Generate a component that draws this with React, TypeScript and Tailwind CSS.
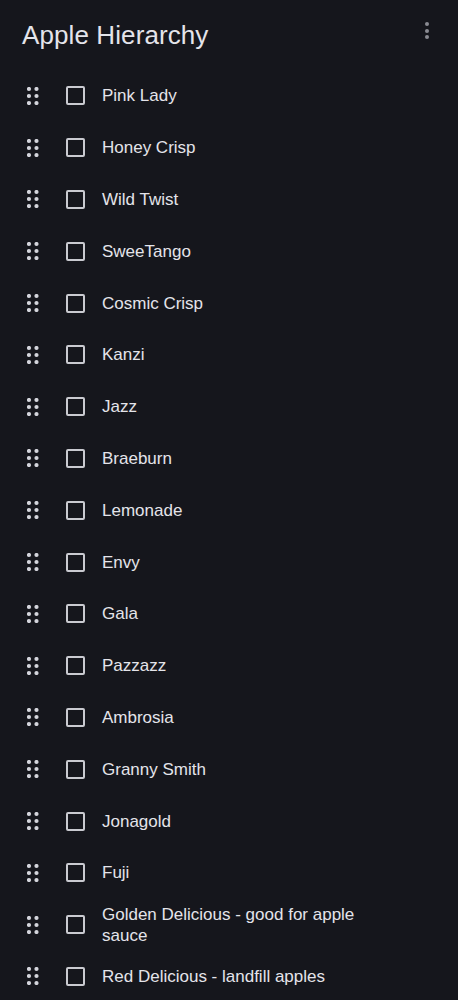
import React from 'react';

const APPLES = [
  'Pink Lady',
  'Honey Crisp',
  'Wild Twist',
  'SweeTango',
  'Cosmic Crisp',
  'Kanzi',
  'Jazz',
  'Braeburn',
  'Lemonade',
  'Envy',
  'Gala',
  'Pazzazz',
  'Ambrosia',
  'Granny Smith',
  'Jonagold',
  'Fuji',
  'Golden Delicious - good for apple sauce',
  'Red Delicious - landfill apples',
];

const DragHandle: React.FC = () => (
  <svg width="12" height="18" viewBox="0 0 12 18" className="shrink-0">
    {[2, 9, 16].map(cy =>
      [2, 9.5].map(cx => <circle key={`${cx}-${cy}`} cx={cx} cy={cy} r="2.1" fill="#d4d5dc" />)
    )}
  </svg>
);

const App: React.FC = () => {
  return (
    <div
      className="min-h-screen bg-[#15161c] text-[#e4e4ea]"
      style={{ fontFamily: '"Liberation Sans", Arial, sans-serif' }}
    >
      <header className="flex items-start justify-between pl-[22px] pr-[29px] pt-4 mb-4">
        <h1 className="text-[26px] leading-[38px] font-normal tracking-[0.1px]">Apple Hierarchy</h1>
        <button className="flex flex-col gap-[2.5px] pt-[6px]">
          <span className="block w-[4px] h-[4px] rounded-full bg-[#8a8b92]" />
          <span className="block w-[4px] h-[4px] rounded-full bg-[#8a8b92]" />
          <span className="block w-[4px] h-[4px] rounded-full bg-[#8a8b92]" />
        </button>
      </header>

      <ul>
        {APPLES.map(name => (
          <li key={name} className="flex items-center h-[51.8px] pl-[27px] pr-[70px]">
            <DragHandle />
            <span className="ml-[27px] w-[19px] h-[19px] shrink-0 rounded-[2px] border-2 border-[#c9cad0]" />
            <span className="ml-[17px] text-[17px] leading-[21px]">{name}</span>
          </li>
        ))}
      </ul>
    </div>
  );
};

export default App;
